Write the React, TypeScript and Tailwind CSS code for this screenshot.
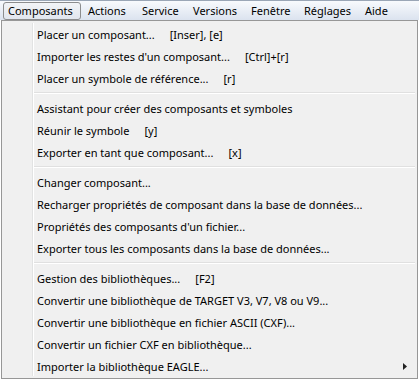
import { Fragment } from 'react'

type Item = { label: string; key?: string; sub?: boolean }

const groups: Item[][] = [
  [
    { label: 'Placer un composant...', key: '[Inser], [e]' },
    { label: "Importer les restes d'un composant...", key: '[Ctrl]+[r]' },
    { label: 'Placer un symbole de référence...', key: '[r]' },
  ],
  [
    { label: 'Assistant pour créer des composants et symboles' },
    { label: 'Réunir le symbole', key: '[y]' },
    { label: 'Exporter en tant que composant...', key: '[x]' },
  ],
  [
    { label: 'Changer composant...' },
    { label: 'Recharger propriétés de composant dans la base de données...' },
    { label: "Propriétés des composants d'un fichier..." },
    { label: 'Exporter tous les composants dans la base de données...' },
  ],
  [
    { label: 'Gestion des bibliothèques...', key: '[F2]' },
    { label: 'Convertir une bibliothèque de TARGET V3, V7, V8 ou V9...' },
    { label: 'Convertir une bibliothèque en fichier ASCII (CXF)...' },
    { label: 'Convertir un fichier CXF en bibliothèque...' },
    { label: 'Importer la bibliothèque EAGLE...', sub: true },
  ],
]

const menus = [
  { name: 'Actions', w: 'w-[54px]' },
  { name: 'Service', w: 'w-[51px]' },
  { name: 'Versions', w: 'w-[58px]' },
  { name: 'Fenêtre', w: 'w-[53px]' },
  { name: 'Réglages', w: 'w-[61px]' },
  { name: 'Aide', w: 'w-[40px]' },
]

export default function App() {
  return (
    <div className="w-[419px] h-[380px] bg-white text-[11px] text-black overflow-hidden font-['Segoe_UI','Noto_Sans',sans-serif] leading-none">
      {/* Menu bar */}
      <div className="h-[20px] flex items-center bg-gradient-to-b from-[#f8fafd] to-[#dbe3ef] border-t border-[#9aa6b6]">
        <div className="ml-[3px] w-[78px] h-[18px] pl-[4px] flex items-center rounded-[3px] border border-[#8c8d8e] bg-gradient-to-b from-[#f2f4f7] to-[#e1e6ee]">
          Composants
        </div>
        {menus.map((m) => (
          <div key={m.name} className={`${m.w} pl-[7px] h-[18px] flex items-center shrink-0`}>
            {m.name}
          </div>
        ))}
      </div>

      {/* Dropdown */}
      <div className="ml-[1px] w-[417px] h-[359px] border border-[#979797] bg-[#f0f0f0] relative py-[2px]">
        <div className="absolute left-[30px] top-[2px] bottom-[2px] w-[2px] border-l border-[#e2e3e3] bg-white" />
        {groups.map((g, gi) => (
          <Fragment key={gi}>
            {gi > 0 && (
              <div className="h-[8px] flex flex-col justify-center pl-[31px] pr-[2px]">
                <div className="h-px bg-[#e0e0e0]" />
                <div className="h-px bg-white" />
              </div>
            )}
            {g.map((it) => (
              <div key={it.label} className="h-[22px] flex items-center pl-[35px] pr-[12px] relative">
                <span>{it.label}</span>
                {it.key && <span className="ml-[15px]">{it.key}</span>}
                {it.sub && (
                  <svg className="absolute right-[10px] top-[8px]" width="4" height="7" viewBox="0 0 4 7">
                    <path d="M0 0 L4 3.5 L0 7 Z" fill="#222" />
                  </svg>
                )}
              </div>
            ))}
          </Fragment>
        ))}
      </div>
    </div>
  )
}
